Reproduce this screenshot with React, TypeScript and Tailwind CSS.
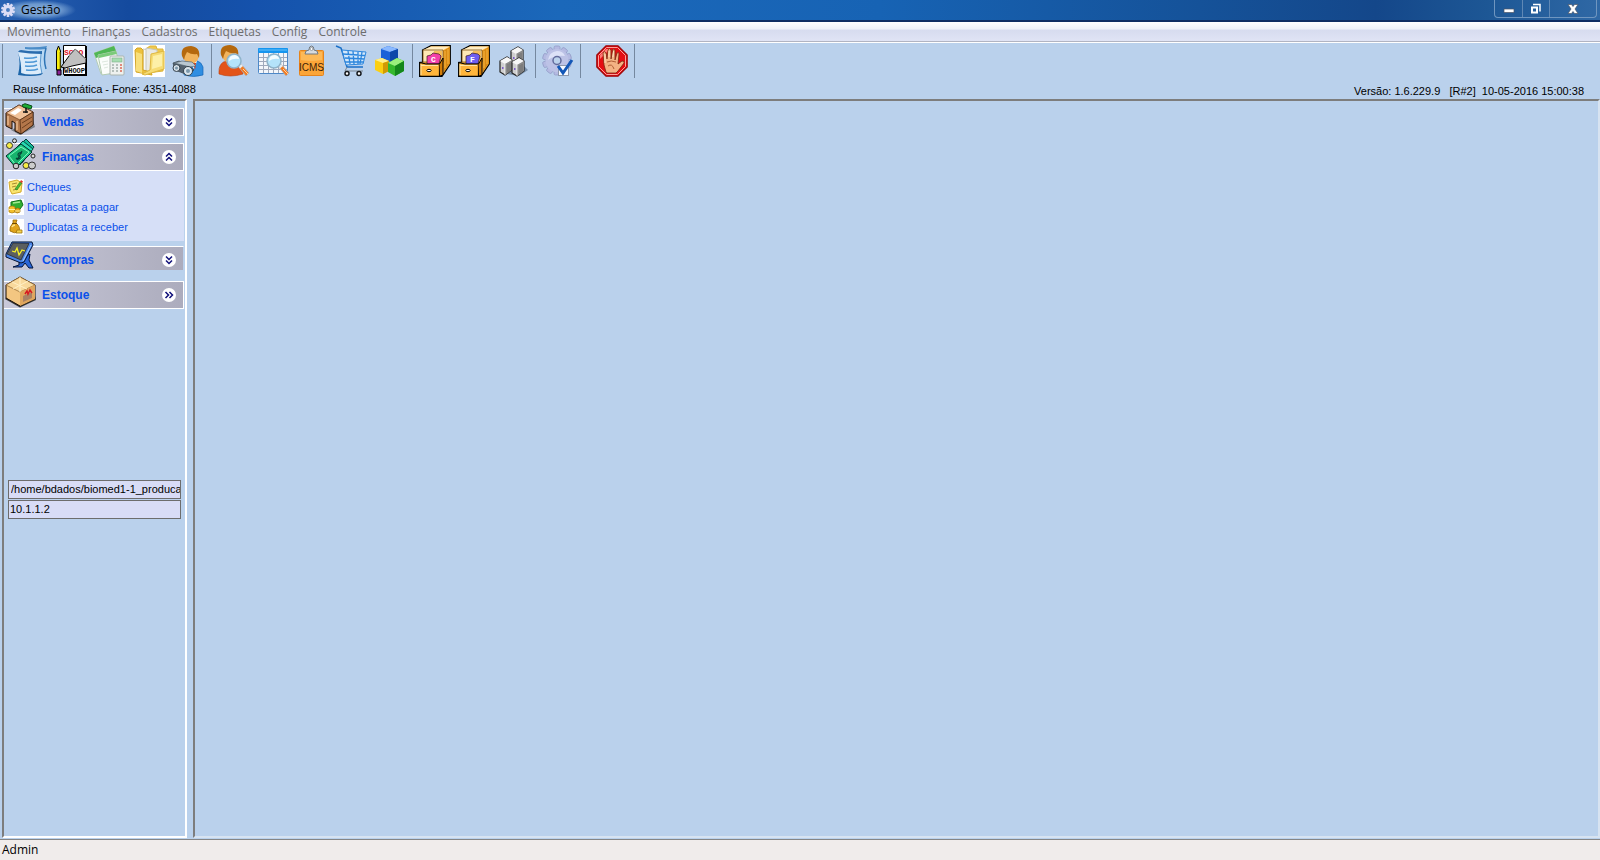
import { useState } from 'react';
import type { ReactNode } from 'react';

const menus = ['Movimento', 'Finanças', 'Cadastros', 'Etiquetas', 'Config', 'Controle'];

/* ---------- Toolbar icons ---------- */

function Svg({ children }: { children: ReactNode }) {
  return (
    <svg className="w-8 h-8 shrink-0" viewBox="0 0 32 32" fill="none" aria-hidden="true">
      {children}
    </svg>
  );
}

function DocumentsIcon() {
  return (
    <Svg>
      <path d="M9 3 Q20 4 31 1 Q28 14 31 24 L27 27 Q15 25 8 27 Z" fill="#b9d8f3" />
      <path d="M9 2 Q20 3 31 1 L30 4 Q19 5 9 4Z" fill="#4b8cc8" />
      <path d="M30 3 Q27 14 30 24" stroke="#2f74b5" strokeWidth="1.500" />
      <path d="M2 7 L25 9 Q23 20 26 29 Q16 31 6 29 Q3 18 2 7Z" fill="#dcecfa" />
      <path d="M2 7 Q3 5 5 5 Q16 7 26 6 L26 9 Q13 9 2 7Z" fill="#2a6cae" />
      <path d="M25 9 Q23 19 26 29" stroke="#5f9ad0" />
      <path d="M2 7 Q6 19 5 28 Q14 31 27 28 L25 30 Q14 32 2 30 Q5 19 2 7Z" fill="#1c65a8" />
      <path d="M8 13 Q15 14 21 12 M9 17 Q16 18 21 16 M9 21 Q16 22 21 20 M10 25 Q17 26 22 24" stroke="#4c97d6" strokeWidth="1.500" />
    </Svg>
  );
}

function ScoopIcon() {
  return (
    <Svg>
      <path d="M8.500 .5 h22 v29 h-22z" fill="#fff" stroke="#000" />
      <path d="M31 1 v30 M9 30 h22" stroke="#000" strokeWidth="2" />
      <text x="9" y="10" fontSize="8" fontWeight="bold" fontFamily="Liberation Mono" fill="#e0101c">SCOO</text>
      <text x="9" y="28" fontSize="7" fontWeight="bold" fontFamily="Liberation Mono" fill="#111">WHOOP</text>
      <path d="M14 11 L20 4 L31 14 V18 L17 21 L10 23 L6 22Z" fill="#c0c0c0" stroke="#000" />
      <path d="M14 11 L20 4 L31 14" stroke="#8d8d8d" />
      <path d="M1.500 6 L3.500 1 L5.500 6 V25 H1.500Z" fill="#f8ee10" stroke="#000" />
      <path d="M2 25 h4 v5 h-4z" fill="#8b2296" stroke="#000" />
      <path d="M5 7 V24" stroke="#938600" />
    </Svg>
  );
}

function ReportIcon() {
  return (
    <Svg>
      <path d="M0 8 L20 1 L27 23 L7 29Z" fill="#f4f9f3" stroke="#b5cdb6" />
      <path d="M0 8 L20 1 L22 6 L2 13Z" fill="#4fb754" />
      <path d="M4 10 L22 6 L27 27 L8 30Z" fill="#fbfdfb" stroke="#b2cbb2" />
      <path d="M4 10 L22 6 L23 9 L5 13Z" fill="#7bcb7a" />
      <path d="M8 17 l6 -1 M9 20 l5 -1 M10 23 l4 -1" stroke="#dde7de" />
      <rect x="16" y="11" width="14" height="19" rx="1" fill="#eef1ef" stroke="#aab4ae" />
      <rect x="18" y="13" width="10" height="4" fill="#a6ddb0" stroke="#7dae89" strokeWidth=".6" />
      <path d="M18 20 h2 M22 20 h2 M18 23 h2 M22 23 h2 M18 26 h2 M22 26 h2" stroke="#b5bfbb" strokeWidth="2" />
      <path d="M26 20 h2 M26 23 h2 M26 26 h2" stroke="#e08a7c" strokeWidth="2" />
    </Svg>
  );
}

function FolderIcon() {
  return (
    <Svg>
      <rect width="32" height="32" fill="#fff" />
      <path d="M14 3 L17 1 H23 L24 4 H30 V26 L14 28Z" fill="#f0c94e" stroke="#dcb53a" />
      <path d="M10 4 L21 6 V26 L10 26Z" fill="#f8f8f5" stroke="#c9c9c0" />
      <path d="M13 3 L24 5 V24 L13 27Z" fill="#e9e9e4" stroke="#c8c7ba" />
      <path d="M2 5 L4 3 H8 L10 5 V25 L18 27 L19 30 L3 27Z" fill="#edc13c" stroke="#d4a628" />
      <path d="M3 7 L9 9 V28 L3 26Z" fill="#f8df7b" />
      <path d="M18 9 L31 6 V24 L12 30 L9 29 L17 25Z" fill="#f6dc74" stroke="#dfb840" />
      <path d="M20 11 L29 9 V21 L19 24Z" fill="#fdf0a8" />
    </Svg>
  );
}

function PersonShape() {
  return (
    <>
      <path d="M8 10 Q6 1 15 1 Q25 1 24 10 Q22 18 16 18 Q10 18 8 10Z" fill="#f2b45c" />
      <path d="M7 10 Q5 0 16 0 Q26 1 24 12 L22 8 Q17 9 12 6 L10 10 L9 14Z" fill="#b5690f" />
    </>
  );
}

function PartnerIcon() {
  return (
    <Svg>
      <path d="M12 17 Q28 12 31 22 L31 30 Q22 33 12 30Z" fill="#2f8ee2" stroke="#1766b5" strokeWidth=".7" />
      <path d="M18 17 L22 24 L25 16Z" fill="#fff" />
      <path d="M21 18 L23 25 L24 18Z" fill="#cc3b26" />
      <g transform="translate(3 1)"><PersonShape /></g>
      <path d="M1 18 L7 16 L17 20 L22 25 L16 30 L3 25Z" fill="#53616e" stroke="#36434e" strokeWidth=".7" />
      <path d="M2 18 L10 16 L20 17 L24 21 L18 22Z" fill="#b9c7d1" stroke="#556471" strokeWidth=".7" />
      <circle cx="4.500" cy="23" r="3.500" fill="#d6dfe6" stroke="#35434f" />
      <circle cx="16" cy="26" r="4.500" fill="#dae4eb" stroke="#35434f" />
      <circle cx="16" cy="26" r="2" fill="#7b98ac" />
      <circle cx="4.500" cy="23" r="1.500" fill="#7b98ac" />
    </Svg>
  );
}

function Lens() {
  return (
    <>
      <path d="M21 21 L24 19 L32 28 L29 31Z" fill="#f47b20" stroke="#aeb5bd" strokeWidth=".8" />
      <path d="M21 21 L24 19 L26 21 L23 23.500Z" fill="#e7edf2" />
      <path d="M26 24 L31 29" stroke="#ffd0a0" />
      <circle cx="17" cy="16" r="7" fill="#b4e3fa" stroke="#8fb3c9" strokeWidth="1.500" />
      <path d="M12 16 Q12 10 18 10 Q22 11 22 14 Q16 13 12 16Z" fill="#f4fdff" />
    </>
  );
}

function SearchPersonIcon() {
  return (
    <Svg>
      <path d="M1 29 Q0 17 9 16 L17 16 Q25 18 25 29 Q12 33 1 29Z" fill="#e35418" stroke="#bd3e0b" strokeWidth=".6" />
      <path d="M8 15 L12 22 L17 16Z" fill="#f8bb62" />
      <g transform="translate(-4 0)"><PersonShape /></g>
      <g transform="translate(-1 0)"><Lens /></g>
    </Svg>
  );
}

function SearchTableIcon() {
  return (
    <Svg>
      <rect x="1.500" y="3.500" width="29" height="25" rx="1" fill="#f3f6fb" stroke="#4d88c8" />
      <path d="M6.500 8 V28 M11.500 8 V28 M16.500 8 V28 M21.500 8 V28 M26.500 8 V28 M2 12.500 H30 M2 16.500 H30 M2 20.500 H30 M2 24.500 H30" stroke="#9fa9bc" />
      <rect x="1" y="3" width="30" height="5" rx="1" fill="#1595ef" />
      <path d="M2 5 H30" stroke="#69c2fa" />
      <Lens />
    </Svg>
  );
}

function IcmsIcon() {
  return (
    <Svg>
      <rect x="3.500" y="5.500" width="24" height="25" rx="1" fill="#fba538" stroke="#e5841c" />
      <path d="M5 7 H26 V15 Q14 17 5 15Z" fill="#fdb957" />
      <path d="M9 9 Q9 5 13 5 Q13 1 15.500 1 Q18 1 18 5 Q22 5 22 9Z" fill="#d7dbdf" stroke="#72797f" />
      <circle cx="15.500" cy="4" r="1.500" fill="#fff" stroke="#969da5" />
      <text x="3" y="26" fontSize="10" fontFamily="Liberation Sans" fill="#3d2209">ICMS</text>
    </Svg>
  );
}

function CartIcon() {
  return (
    <Svg>
      <path d="M1 1 L6 3 L12 22 H28" stroke="#1a6fc7" strokeWidth="1.500" />
      <path d="M7 5 L31 7 L28 19 L11 20Z" fill="#d3e7fa" stroke="#2c86dd" />
      <path d="M8 9 L30 10.500 M10 13 L29 14 M10 17 L29 17 M13 6 L15 19 M18 6 L19 19 M23 7 V19 M27 7 L25 19" stroke="#2c86dd" strokeWidth="1.300" />
      <path d="M12 22 L10 26 H28" stroke="#7b8691" />
      <circle cx="12" cy="28.500" r="2" fill="#fff" stroke="#15181c" strokeWidth="1.500" />
      <circle cx="24" cy="28.500" r="2" fill="#fff" stroke="#15181c" strokeWidth="1.500" />
    </Svg>
  );
}

function CubesIcon() {
  return (
    <Svg>
      <path d="M7 4 L14 1 L24 4 V14 L16 17 L7 14Z" fill="#1b62d8" />
      <path d="M7 4 L14 1 L24 4 L16 7Z" fill="#8ab9ff" />
      <path d="M16 7 L24 4 V14 L16 17Z" fill="#0c47a9" />
      <path d="M1 15 L8 13 L15 16 V26 L9 29 L1 25Z" fill="#fbcf12" />
      <path d="M1 15 L8 13 L15 16 L9 18Z" fill="#fff08a" />
      <path d="M9 18 L15 16 V26 L9 29Z" fill="#d09a05" />
      <path d="M14 18 L23 13 L30 16 V26 L21 31 L14 27Z" fill="#35b82d" />
      <path d="M14 18 L23 13 L30 16 L21 21Z" fill="#9aef7d" />
      <path d="M21 21 L30 16 V26 L21 31Z" fill="#14871b" />
    </Svg>
  );
}

function DrawerIcon({ letter, color }: { letter: string; color: string }) {
  return (
    <Svg>
      <path d="M3.500 5 L12 .7 H31.300 V19 L23 31.300 H.7 V17.500 L3.500 17Z" fill="#ffb640" stroke="#000" strokeWidth="1.200" />
      <path d="M4 5 L12 1.500 H31 L24 5Z" fill="#ffedc4" />
      <path d="M24 6 L31 2 V18 L25 27 Z" fill="#d98a14" />
      <path d="M26 6 V23 M29 4 V19" stroke="#f7b640" />
      <path d="M4 5 H24 V17 H4Z" fill="#ffe7b4" stroke="#7b4e0c" strokeWidth=".8" />
      <path d="M15 6 H23 V17 H15Z" fill="#f5bd5c" />
      <path d="M8 11 L12 10 L14 8 L20 9 L22 11 L20 19 H8Z" fill={color} stroke="#3b1d20" strokeWidth=".7" />
      <text x="12" y="17" fontSize="8" fontWeight="bold" fontFamily="Liberation Mono" fill="#fff">{letter}</text>
      <path d="M.7 17.500 L7 19 H20.500 V31.300 H.7Z" fill="#ffb53b" stroke="#000" strokeWidth="1.200" />
      <path d="M20.500 19 L24 13 V30 L21 31" fill="#d47d07" stroke="#000" />
      <path d="M2 19 V30 M2 20.500 H19" stroke="#ffe5a3" />
      <ellipse cx="10" cy="25.500" rx="2.200" ry="1.200" fill="#fff" stroke="#000" />
    </Svg>
  );
}

function Tower({ x, y }: { x: number; y: number }) {
  return (
    <g transform={`translate(${x} ${y})`}>
      <path d="M0 4 L7 0 L12 3 V13 L5 18 L0 15Z" fill="#cfcfcf" stroke="#222" strokeWidth="1.200" />
      <path d="M0 4 L7 0 L12 3 L5 7Z" fill="#f7f7f7" />
      <path d="M5 7 L12 3 V13 L5 18Z" fill="#8a8a8a" />
      <path d="M5 7 V18" stroke="#fff" strokeWidth=".7" />
      <path d="M2 11 h1.500" stroke="#6236c8" strokeWidth="1.500" />
      <path d="M8 7 V15 M10 6 V14" stroke="#6b6b6b" strokeWidth=".8" />
    </g>
  );
}

function ServersIcon() {
  return (
    <Svg>
      <path d="M10 29 L25 19 L31 25 L22 31Z" fill="#7990ab" />
      <Tower x={14} y={2} />
      <Tower x={3} y={12} />
      <Tower x={15} y={13} />
    </Svg>
  );
}

const gearTeeth = [0, 36, 72, 108, 144, 180, 216, 252, 288, 324];

function GearCheckIcon() {
  return (
    <Svg>
      {gearTeeth.map(a => (
        <rect key={a} x="12" y="1" width="6" height="7" rx="1.500" fill="#b4bae2" stroke="#8f97c4" strokeWidth=".7" transform={`rotate(${a} 15 15.500)`} />
      ))}
      <circle cx="15" cy="15.500" r="11.500" fill="#bcc2e6" />
      <path d="M6 15 Q7 7 15 6 Q21 6 23 11 Q13 10 6 15Z" fill="#dce1f7" />
      <circle cx="15" cy="15.500" r="4" fill="#bcd2ec" stroke="#626b9b" strokeWidth="1.500" />
      <rect x="16.500" y="20.500" width="10" height="10" fill="#f6f9ff" stroke="#8d98ab" />
      <path d="M16 21 L21 28 L30 15" stroke="#1357b7" strokeWidth="3" />
    </Svg>
  );
}

function StopIcon() {
  return (
    <Svg>
      <path d="M10 .8 H22 L31.200 10 V22 L22 31.200 H10 L.8 22 V10Z" fill="#e50d13" stroke="#9a0b0c" strokeWidth="1.200" />
      <path d="M10.500 2.500 H21.500 L29.500 10.500 V21.500 L21.500 29.500 H10.500 L2.500 21.500 V10.500Z" stroke="#ff9d99" />
      <path d="M4 10 L10 4 H14 L4 14Z" fill="#ff7874" />
      <path d="M10 27 L8 20 L7 8 Q8 5 10 8 L11 14 L12 5 Q13 2 15 5 V14 L17 4 Q19 3 19 6 V15 L21 8 Q23 6 23 9 L22 19 L26 16 Q29 16 28 18 L22 26 L20 28 H11Z" fill="#f4b284" stroke="#7a2a12" strokeWidth=".8" />
      <path d="M11 17 Q15 15 20 17 M12 21 Q16 18 18 24" stroke="#b05e36" />
      <path d="M9 18 V9 M13 12 V6 M17 12 L17.500 6" stroke="#ffe0c1" />
    </Svg>
  );
}

/* ---------- Sidebar icons ---------- */

function DeskIcon() {
  return (
    <Svg>
      <path d="M6 27 L15 32 L30 24 L28 17Z" fill="#7b8088" />
      <path d="M1 10 L14 2 L28 9 V22 L16 31 L10 28 V20 L7 18 V26 L1 23Z" fill="#b57a4d" stroke="#1b0e06" />
      <path d="M1 10 L14 2 L28 9 L15 17Z" fill="#f0c29a" stroke="#6e3f1f" strokeWidth=".7" />
      <path d="M15 17 L28 9 V22 L16 31Z" fill="#b3764a" stroke="#41200c" strokeWidth=".7" />
      <path d="M17 20 L27 14 M17 25 L27 18" stroke="#6c3f1f" />
      <path d="M3 13 V22 M12 18 V27" stroke="#dba87b" strokeWidth="2" />
      <path d="M5 10 L13 5 L17 7 L10 12Z" fill="#fff" />
      <path d="M17 2 L20 .7 L27 3 L26 6 L18 4Z" fill="#1cad36" stroke="#0a4c19" />
      <path d="M21 5 V10 M18 9 h5" stroke="#161616" strokeWidth="1.500" />
    </Svg>
  );
}

function MoneyIcon() {
  return (
    <Svg>
      <path d="M9 13 L21 1 L29 9 L17 25Z" fill="#15bd9b" stroke="#053b34" />
      <path d="M5 16 L18 3 L28 11 L15 27Z" fill="#27d9b3" stroke="#06493f" />
      <path d="M1 18 L16 6 L27 14 L11 30Z" fill="#1ccb86" stroke="#022f27" />
      <path d="M4 18 L16 9 L24 14 L11 27Z" fill="#17b36d" stroke="#81f5ba" />
      <path d="M11 20 Q13 22 15 20 Q16 18 13 17 Q13 14 17 15 M12 22 L17 13" stroke="#064737" strokeWidth="1.300" />
      <circle cx="4.500" cy="7.500" r="3" fill="#f6ec45" stroke="#333" />
      <circle cx="9.500" cy="2.800" r="2" fill="#ddd" stroke="#222" />
      <circle cx="28" cy="18" r="2" fill="#ddd" stroke="#222" />
      <circle cx="11" cy="28" r="2.800" fill="#c9c9c9" stroke="#222" />
      <circle cx="21" cy="27.500" r="3" fill="#f6ec45" stroke="#333" />
      <circle cx="27" cy="27.500" r="3.500" fill="#ccc" stroke="#333" />
    </Svg>
  );
}

function MonitorIcon() {
  return (
    <Svg>
      <path d="M14 21 L19 18 L21 15 L25 13 L24 19 L28 27 H24 L20 22 L17 26 H8 L14 24Z" fill="#2a65d8" stroke="#03143c" />
      <path d="M7 1 L27 1 L28 4 L19 21 L16 22 L1 16 L1 13Z" fill="#4a86ea" stroke="#061333" />
      <path d="M8 2 L24 2.500 L16 19 L2 13Z" fill="#5b5f60" stroke="#222" strokeWidth=".7" />
      <path d="M7 10 L10 11 L12 7 L14 14 L17 9 L20 10" stroke="#f6f129" strokeWidth="1.300" />
      <path d="M26 4 L18 20" stroke="#a5cfff" />
    </Svg>
  );
}

function BoxIcon() {
  return (
    <Svg>
      <path d="M0 23 L15 31.500 L31 24 L30 20 H2Z" fill="#34383c" />
      <path d="M1 9 L15 1 L30 9 V23 L15 30 L1 22Z" fill="#f3c681" stroke="#1b1007" />
      <path d="M1 9 L15 1 L30 9 L15 16Z" fill="#f8d99c" stroke="#8f642e" strokeWidth=".7" />
      <path d="M15 16 L30 9 V23 L15 30Z" fill="#dfa65e" />
      <path d="M7 6 L22 13 M23 5 L8 13 M15 1 V16" stroke="#fff0c6" />
      <path d="M18 20 L27 16 V22 L18 26Z" fill="#a98164" />
      <path d="M20 18 L22 15 L23 18 L25 14 L27 17" stroke="#d61a22" strokeWidth="1.500" />
    </Svg>
  );
}

function SmallSvg({ children }: { children: ReactNode }) {
  return (
    <svg className="w-4 h-4 shrink-0" viewBox="0 0 16 16" fill="none" aria-hidden="true">
      <rect width="16" height="16" fill="#fff" />
      {children}
    </svg>
  );
}

function ChequeIcon() {
  return (
    <SmallSvg>
      <path d="M1 3 L9 1 L14 4 L13 13 L4 15 L2 11Z" fill="#f9e56f" stroke="#d3a92c" />
      <path d="M4 5 L9 4 M4 8 L8 7 M5 11 L10 10" stroke="#a88a30" />
      <path d="M7 10 L12 3 L14 4 L9 11Z" fill="#4cba34" stroke="#237b20" strokeWidth=".6" />
      <path d="M12 3 L13 1 L15 2.500 L14 4Z" fill="#e23a2a" />
    </SmallSvg>
  );
}

function PayIcon() {
  return (
    <SmallSvg>
      <path d="M3 3 L13 1 L15 6 L12 10 L3 9Z" fill="#2fae32" stroke="#11721a" />
      <path d="M5 4 L12 3" stroke="#a2ec91" strokeWidth="1.500" />
      <path d="M1 8 Q4 6 7 8 V13 Q4 15 1 13Z" fill="#f4c02b" stroke="#aa7b08" strokeWidth=".7" />
      <path d="M7 10 Q10 8 12 10 V13 Q9 15 7 13Z" fill="#e7a81b" stroke="#9c6d07" strokeWidth=".7" />
      <path d="M1 10.500 H7 M7 12 H12" stroke="#fff0a1" />
    </SmallSvg>
  );
}

function ReceiveIcon() {
  return (
    <SmallSvg>
      <path d="M5 1 L9 1 L8 4 Q13 8 11 13 Q6 15 2 12 Q1 8 5 4Z" fill="#dfa31c" stroke="#98690a" strokeWidth=".8" />
      <path d="M4 4.500 H9" stroke="#6f4b05" />
      <path d="M4 8 Q5 6 7 6" stroke="#ffe38a" strokeWidth="1.500" />
      <path d="M9 11 H14 V14 H8Z" fill="#f6d24e" stroke="#9c740f" strokeWidth=".8" />
    </SmallSvg>
  );
}

/* ---------- Toolbar ---------- */

const toolGroups = [
  {
    style: 'w-[209px] pl-[9px]',
    tools: [
      { label: 'Documentos', icon: <DocumentsIcon /> },
      { label: 'Scoop', icon: <ScoopIcon /> },
      { label: 'Relatórios', icon: <ReportIcon /> },
      { label: 'Pastas', icon: <FolderIcon /> },
      { label: 'Parceiros', icon: <PartnerIcon /> },
    ],
  },
  {
    style: 'w-[201px] pl-[2px]',
    tools: [
      { label: 'Consultar clientes', icon: <SearchPersonIcon /> },
      { label: 'Consultar tabela', icon: <SearchTableIcon /> },
      { label: 'ICMS', icon: <IcmsIcon /> },
      { label: 'Compras', icon: <CartIcon /> },
      { label: 'Produtos', icon: <CubesIcon /> },
    ],
  },
  {
    style: 'w-[123px] pl-[2px]',
    tools: [
      { label: 'Arquivo C', icon: <DrawerIcon letter="C" color="#f33fa9" /> },
      { label: 'Arquivo F', icon: <DrawerIcon letter="F" color="#6d5df0" /> },
      { label: 'Servidores', icon: <ServersIcon /> },
    ],
  },
  { style: 'w-[45px] pl-[2px]', tools: [{ label: 'Configurações', icon: <GearCheckIcon /> }] },
  { style: 'w-[54px] pl-[11px]', tools: [{ label: 'Sair', icon: <StopIcon /> }] },
];

/* ---------- Sidebar ---------- */

type Direction = 'down' | 'up' | 'right';

const chevrons: Record<Direction, string> = {
  down: 'M4 3.500 L7 6.500 L10 3.500 M4 7.500 L7 10.500 L10 7.500',
  up: 'M4 6.500 L7 3.500 L10 6.500 M4 10.500 L7 7.500 L10 10.500',
  right: 'M3.500 4 L6.500 7 L3.500 10 M7.500 4 L10.500 7 L7.500 10',
};

interface SectionHeaderProps {
  title: string;
  icon: ReactNode;
  direction: Direction;
  expanded?: boolean;
  short?: boolean;
  onClick?: () => void;
}

function SectionHeader({ title, icon, direction, expanded = false, short, onClick }: SectionHeaderProps) {
  return (
    <button
      type="button"
      aria-expanded={expanded}
      onClick={onClick}
      className={`flex w-full h-7 items-end border-t border-r border-b border-white bg-linear-to-r from-[#c9c9d9] to-[#acacbd] bg-no-repeat pl-px pr-[7px] text-left ${short ? 'border-b-transparent bg-clip-padding bg-[length:100%_23px] border-r-transparent' : ''}`}
    >
      {icon}
      <span className="flex flex-1 h-full items-center justify-between pl-[5px]">
        <span className="text-[12px] font-bold text-[#0a50ea]">{title}</span>
        <svg className="w-[14px] h-[14px]" viewBox="0 0 14 14" fill="none" aria-hidden="true">
          <circle cx="7" cy="7" r="7" fill="#fff" />
          <path d={chevrons[direction]} stroke="#10107a" strokeWidth="1.500" />
        </svg>
      </span>
    </button>
  );
}

const financeLinks = [
  { label: 'Cheques', icon: <ChequeIcon /> },
  { label: 'Duplicatas a pagar', icon: <PayIcon /> },
  { label: 'Duplicatas a receber', icon: <ReceiveIcon /> },
];

function Sidebar() {
  const [financeOpen, setFinanceOpen] = useState(true);
  const [database, setDatabase] = useState('/home/bdados/biomed1-1_producao');
  const [host, setHost] = useState('10.1.1.2');

  return (
    <aside className="flex w-[185px] shrink-0 flex-col border-2 border-t-[#7d7d7d] border-l-[#7d7d7d] border-r-white border-b-white pt-[7px]">
      <nav className="mr-px flex flex-col">
        <SectionHeader title="Vendas" icon={<DeskIcon />} direction="down" />
        <div className="mt-[7px]">
          <SectionHeader
            title="Finanças"
            icon={<MoneyIcon />}
            direction={financeOpen ? 'up' : 'down'}
            expanded={financeOpen}
            onClick={() => setFinanceOpen(!financeOpen)}
          />
          {financeOpen && (
            <ul className="bg-[#d6dff7] h-[70px] pt-[6px] pl-1">
              {financeLinks.map(link => (
                <li key={link.label}>
                  <a href="#" className="flex h-5 items-center gap-[3px] text-[11px] text-[#0a50ea]">
                    {link.icon}
                    {link.label}
                  </a>
                </li>
              ))}
            </ul>
          )}
        </div>
        <div className="mt-[5px]">
          <SectionHeader title="Compras" icon={<MonitorIcon />} direction="down" short />
        </div>
        <div className="mt-[7px]">
          <SectionHeader title="Estoque" icon={<BoxIcon />} direction="right" />
        </div>
      </nav>
      <div className="mt-[171px] flex flex-col gap-px px-1">
        <input
          aria-label="Banco de dados"
          value={database}
          onChange={e => setDatabase(e.target.value)}
          className="h-[19px] w-full border border-[#6d6d6d] bg-[#d8dcf6] pb-px pl-[2px] text-[11px] text-black outline-none"
        />
        <input
          aria-label="Servidor"
          value={host}
          onChange={e => setHost(e.target.value)}
          className="h-[19px] w-full border border-[#6d6d6d] bg-[#d8dcf6] pb-px pl-px text-[11px] text-black outline-none"
        />
      </div>
    </aside>
  );
}

/* ---------- Window ---------- */

function TitleBar() {
  return (
    <header className="flex h-[22px] justify-between border-b-2 border-[#102f63] bg-[linear-gradient(90deg,#2a62b3_0%,#144a9e_8%,#1552ac_16%,#1b68ba_35%,#1763b4_55%,#155299_75%,#14478a_86%,#1d5795_93%,#2f68a5_100%)]">
      <div className="flex items-center gap-[6px] bg-[radial-gradient(closest-side,#86acda_0%,#6c98ce_60%,transparent_100%)] pl-px pr-4">
        <svg className="w-[14px] h-[14px]" viewBox="0 0 32 32" aria-hidden="true">
          {gearTeeth.map(a => (
            <rect key={a} x="13" y="0" width="6" height="8" fill="#dcdcf5" transform={`rotate(${a} 16 16)`} />
          ))}
          <circle cx="16" cy="16" r="8" fill="none" stroke="#dcdcf5" strokeWidth="7" />
        </svg>
        <h1 className="font-['Open_Sans',sans-serif] text-[12px] text-black">Gestão</h1>
      </div>
      <div className="mr-[3px] flex h-[18px] rounded-b-[4px] border border-t-0 border-[#6f96c0]">
        <button type="button" aria-label="Minimizar" className="flex w-7 items-center justify-center border-r border-[#5f88b5]">
          <svg className="w-3 h-3" viewBox="0 0 12 12" aria-hidden="true"><path d="M1 6 h10 v3.500 h-10z" fill="#fff" stroke="#4b5565" strokeWidth=".7" /></svg>
        </button>
        <button type="button" aria-label="Restaurar" className="flex w-[27px] items-center justify-center border-r border-[#5f88b5]">
          <svg className="w-3 h-3" viewBox="0 0 12 12" fill="none" aria-hidden="true">
            <path d="M3 1.500 H10 V8.500" stroke="#fff" strokeWidth="1.500" />
            <path d="M2 4.500 h5 v5 h-5z" stroke="#fff" strokeWidth="2" />
          </svg>
        </button>
        <button type="button" aria-label="Fechar" className="flex w-[46px] items-center justify-center">
          <svg className="w-3 h-3" viewBox="0 0 12 12" aria-hidden="true"><path d="M1 1.500 H4.500 L6 3.500 L7.500 1.500 H11 L8 6 L11 10.500 H7.500 L6 8.500 L4.500 10.500 H1 L4 6Z" fill="#fff" stroke="#4b5565" strokeWidth=".7" /></svg>
        </button>
      </div>
    </header>
  );
}

export default function App() {
  return (
    <div className="flex min-h-screen flex-col bg-[#bad1ec] font-['Liberation_Sans',sans-serif] text-black">
      <TitleBar />

      <nav className="flex h-[20px] items-center gap-[11px] border-b border-[#b1b4c2] bg-[linear-gradient(180deg,#ffffff_0%,#f0f3f9_35%,#d7dcef_45%,#e0e4f5_100%)] pl-[7px] font-['Open_Sans',sans-serif] text-[12px] text-[#6d6d6d]">
        {menus.map(menu => (
          <button key={menu} type="button">{menu}</button>
        ))}
      </nav>

      <div className="flex border-t border-white pt-px pl-[2px]">
        {toolGroups.map((group, i) => (
          <div key={i} className={`flex h-[34px] items-center border-l border-[#75889f] ${group.style}`}>
            {group.tools.map(tool => (
              <button key={tool.label} type="button" aria-label={tool.label} className="flex w-[39px] shrink-0 justify-center">
                {tool.icon}
              </button>
            ))}
          </div>
        ))}
        <div className="h-[34px] border-l border-[#75889f]" />
      </div>

      <div className="flex h-[21px] justify-between pl-[13px] pr-4 text-[11px] leading-4">
        <span className="pt-[3px]">Rause Informática - Fone: 4351-4088</span>
        <span className="self-end whitespace-pre">Versão: 1.6.229.9   [R#2]  10-05-2016 15:00:38</span>
      </div>

      <div className="flex flex-1 gap-[6px] pl-[2px]">
        <Sidebar />
        <main className="flex-1 border-2 border-t-[#7d7d7d] border-l-[#7d7d7d] border-r-[#d7e3f1] border-b-[#d7e3f1]" />
      </div>

      <footer className="mt-px h-[21px] border-t border-[#858585] bg-[#f0eceb] pl-[2px] font-['Open_Sans',sans-serif] text-[12px] leading-5">Admin</footer>
    </div>
  );
}
